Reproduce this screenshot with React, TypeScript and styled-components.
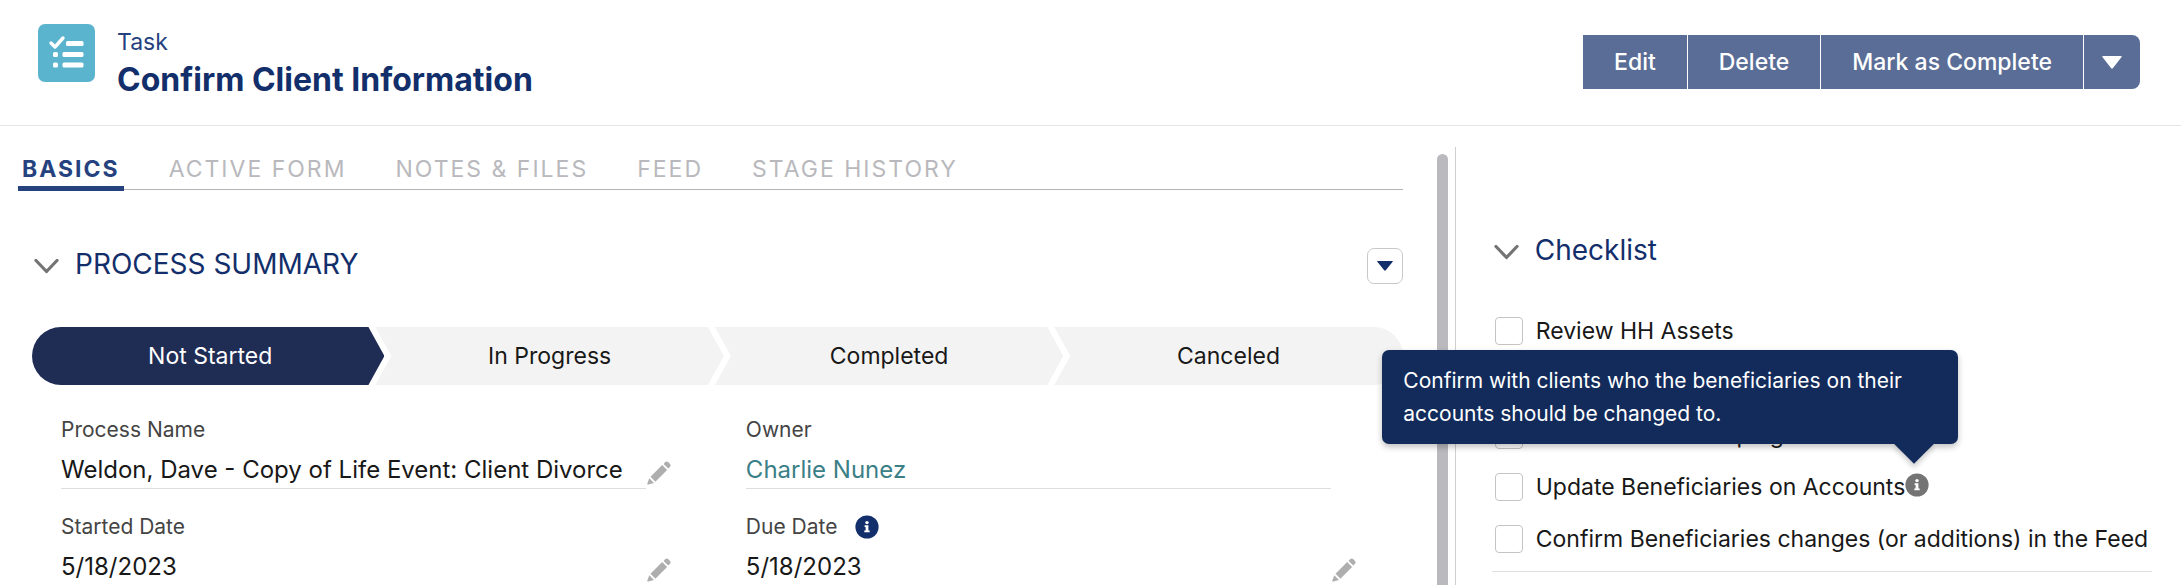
import React from 'react';
import styled, { createGlobalStyle } from 'styled-components';

const deep = '#132f6b';

const GlobalStyle = createGlobalStyle`
  *, *::before, *::after { box-sizing: border-box; }
  body {
    margin: 0;
    background: #fff;
    color: #181818;
    font-family: Inter, "Liberation Sans", sans-serif;
  }
  button { font: inherit; }
  h1, h2, ul, dl, dd, p { margin: 0; padding: 0; }
`;

const Page = styled.div`
  min-height: 100vh;
  display: flex;
  flex-direction: column;
  overflow: hidden;
`;

const Header = styled.header`
  display: flex;
  justify-content: space-between;
  align-items: flex-start;
  height: 126px;
  padding: 24px 41px 0 38px;
  border-bottom: 1px solid #e5e5e5;
`;

const Heading = styled.div`
  display: flex;
  gap: 22px;
`;

const TaskTile = styled.svg`
  width: 57px;
  height: 58px;
  display: block;
`;

const Kicker = styled.p`
  font-size: 23px;
  line-height: 36px;
  color: #25427f;
`;

const Title = styled.h1`
  font-size: 32px;
  line-height: 40px;
  font-weight: 700;
  color: ${deep};
`;

const ButtonGroup = styled.div`
  display: flex;
  gap: 1px;
  margin-top: 11px;
  border-radius: 0 8px 8px 0;
  overflow: hidden;
`;

const ActionButton = styled.button<{ $compact?: boolean }>`
  height: 54px;
  display: flex;
  align-items: center;
  border: 0;
  padding: 0 ${p => (p.$compact ? 18 : 31)}px;
  background: #5a6d96;
  color: #fff;
  font-size: 23px;
  font-weight: 500;
`;

const Body = styled.div`
  flex: 1;
  display: flex;
`;

const Main = styled.main`
  flex: 1;
  display: flex;
  min-width: 0;
`;

const MainContent = styled.div`
  flex: 1;
  min-width: 0;
`;

const ScrollTrack = styled.div`
  flex: none;
  width: 52px;
  padding: 28px 7px 0 34px;
  display: flex;
`;

const ScrollThumb = styled.div`
  width: 11px;
  background: #bab9be;
  border-radius: 6px 6px 0 0;
`;

const Tabs = styled.nav`
  display: flex;
  gap: 41px;
  height: 64px;
  margin-left: 18px;
  border-bottom: 1px solid #b4b4b7;
`;

const Tab = styled.a<{ $active?: boolean }>`
  height: 65px;
  padding: 27px 4px 0;
  font-size: 23px;
  line-height: 32px;
  letter-spacing: 2px;
  text-decoration: none;
  white-space: nowrap;
  font-weight: ${p => (p.$active ? 700 : 400)};
  color: ${p => (p.$active ? '#25427f' : '#b9b9bd')};
  border-bottom: ${p => (p.$active ? '5px solid #25427f' : '0')};
`;

const SectionHead = styled.div<{ $aside?: boolean }>`
  display: flex;
  align-items: flex-start;
  height: 36px;
  margin: ${p => (p.$aside ? '87px 0 47px 38px' : '58px 0 43px 34px')};
`;

const SectionToggle = styled.button`
  display: flex;
  align-items: center;
  gap: 16px;
  border: 0;
  padding: 0;
  background: none;
  color: ${deep};
  font-size: 28px;
  line-height: 32px;
  svg { margin-top: 4px; }
`;

const MenuButton = styled.button`
  margin-left: auto;
  width: 36px;
  height: 36px;
  display: flex;
  align-items: center;
  justify-content: center;
  padding: 0;
  background: #fff;
  border: 1px solid #c9c9c9;
  border-radius: 7px;
`;

const Path = styled.ol`
  list-style: none;
  display: flex;
  height: 58px;
  margin: 0 0 0 32px;
  padding: 0;
  border-radius: 29px;
  overflow: hidden;
`;

const Stage = styled.li<{ $current?: boolean; $edge?: 'first' | 'last' }>`
  flex: 1;
  display: flex;
  align-items: center;
  justify-content: center;
  margin-right: ${p => (p.$edge === 'last' ? 0 : -9)}px;
  padding-left: ${p => (p.$edge === 'first' ? 4 : 0)}px;
  font-size: 23px;
  background: ${p => (p.$current ? '#1f2c54' : '#f3f3f3')};
  color: ${p => (p.$current ? '#fff' : '#181818')};
  clip-path: ${p =>
    p.$edge === 'first'
      ? 'polygon(0 0, calc(100% - 16px) 0, 100% 50%, calc(100% - 16px) 100%, 0 100%)'
      : p.$edge === 'last'
        ? 'polygon(0 0, 100% 0, 100% 100%, 0 100%, 16px 50%)'
        : 'polygon(0 0, calc(100% - 16px) 0, 100% 50%, calc(100% - 16px) 100%, 0 100%, 16px 50%)'};
`;

const Fields = styled.dl`
  display: grid;
  grid-template-columns: 1fr 1fr;
  column-gap: 75px;
  margin: 29px 47px 0 61px;
`;

const Field = styled.div`
  height: 97px;
`;

const FieldLabel = styled.dt`
  display: flex;
  align-items: center;
  gap: 18px;
  font-size: 21px;
  line-height: 32px;
  height: 32px;
  color: #444;
`;

const FieldValue = styled.dd`
  display: flex;
  justify-content: space-between;
  height: 43px;
  margin-right: 25px;
  font-size: 24px;
  line-height: 48px;
  white-space: nowrap;
  border-bottom: 1px solid #dedede;
`;

const OwnerLink = styled.a`
  color: #3b7f87;
  text-decoration: none;
`;

const EditButton = styled.button`
  flex: none;
  width: 24px;
  height: 24px;
  margin: 15px -25px 0 0;
  padding: 0;
  border: 0;
  background: none;
  svg { display: block; }
`;

const Aside = styled.aside`
  flex: 0 0 33.3%;
  min-width: 0;
  margin-top: 21px;
  padding-right: 29px;
  border-left: 1px solid #cfcfcf;
  h2 { font-weight: 400; }
`;

const Checklist = styled.ul`
  list-style: none;
  margin-left: 36px;
  padding-bottom: 18px;
  border-bottom: 1px solid #e0e0e0;
`;

const ChecklistItem = styled.li`
  display: flex;
  align-items: center;
  height: 28px;
  white-space: nowrap;
  & + & { margin-top: 24px; }
`;

const CheckLabel = styled.label`
  display: flex;
  align-items: center;
  gap: 13px;
  margin-left: 3px;
  font-size: 23px;
  line-height: 28px;
`;

const CheckBox = styled.input`
  appearance: none;
  width: 28px;
  height: 28px;
  margin: 0;
  background: #fff;
  border: 1px solid #c4c4c4;
  border-radius: 4px;
`;

const InfoAnchor = styled.span`
  position: relative;
  display: flex;
  width: 24px;
  height: 28px;
`;

const Tooltip = styled.div`
  position: absolute;
  right: -29px;
  bottom: 57px;
  width: 576px;
  padding: 14px 21px;
  border-radius: 7px;
  background: #122b5b;
  color: #fff;
  font-size: 21px;
  line-height: 33px;
  white-space: normal;
  box-shadow: 0 3px 6px rgba(0, 0, 0, 0.25);
  &::after {
    content: '';
    position: absolute;
    right: 30px;
    bottom: -14px;
    width: 28px;
    height: 28px;
    background: #122b5b;
    transform: rotate(45deg);
    box-shadow: 3px 3px 5px rgba(0, 0, 0, 0.18);
    clip-path: polygon(100% 0, 140% 0, 140% 140%, 0 140%, 0 100%);
  }
`;

const Caret = ({ w, h, color }: { w: number; h: number; color: string }) => (
  <svg width={w} height={h} viewBox="0 0 20 14" preserveAspectRatio="none" aria-hidden>
    <path d="M1 0h18q1.400 0 .6 1L11 13q-1 1.200-2 0L.4 1Q-.4 0 1 0z" fill={color} />
  </svg>
);

const Chevron = () => (
  <svg width="25" height="16" viewBox="0 0 25 16" aria-hidden>
    <path d="M2 2.500l10.500 11L23 2.500" fill="none" stroke="#747474" strokeWidth="3.200" strokeLinecap="round" strokeLinejoin="round" />
  </svg>
);

const Pencil = () => (
  <svg width="24" height="24" viewBox="0 0 24 24" fill="#aeaeae" aria-hidden>
    <path d="M16.600 2.900l1.700-1.900q1.400-1.200 2.800 0l1.900 1.900q1.200 1.400 0 2.800l-1.800 1.800z" />
    <path d="M15.200 4.100l4.900 4.900L8.400 20.700l-4.900-4.900z" />
    <path d="M2.300 17.200l4.700 4.700-5.700 1.700q-1.200.2-1-1z" />
  </svg>
);

const Info = ({ color }: { color: string }) => (
  <svg width="24" height="24" viewBox="0 0 24 24" aria-hidden>
    <circle cx="12" cy="12" r="11.600" fill={color} />
    <circle cx="12" cy="7.600" r="1.700" fill="#fff" />
    <path d="M9.600 10.300h3.800v5.200h1.300v1.700H9.300v-1.700h1.300V12h-1z" fill="#fff" />
  </svg>
);

const stages = ['Not Started', 'In Progress', 'Completed', 'Canceled'];
const tabs = ['BASICS', 'ACTIVE FORM', 'NOTES & FILES', 'FEED', 'STAGE HISTORY'];
const tip = 'Confirm with clients who the beneficiaries on their accounts should be changed to.';
const tasks: { text: string; tip?: string }[] = [
  { text: 'Review HH Assets' },
  { text: 'Review Account Titles' },
  { text: 'Discuss Housekeeping Documentation' },
  { text: 'Update Beneficiaries on Accounts', tip },
  { text: 'Confirm Beneficiaries changes (or additions) in the Feed' },
];

const fields: { label: string; value: string; link?: boolean; info?: boolean }[] = [
  { label: 'Process Name', value: 'Weldon, Dave - Copy of Life Event: Client Divorce' },
  { label: 'Owner', value: 'Charlie Nunez', link: true },
  { label: 'Started Date', value: '5/18/2023' },
  { label: 'Due Date', value: '5/18/2023', info: true },
];

export default function App() {
  return (
    <Page>
      <GlobalStyle />
      <Header>
        <Heading>
          <TaskTile viewBox="0 0 57 58" aria-hidden>
            <rect width="57" height="58" rx="7" fill="#5bb4ce" />
            <path d="M13 19l4 4 8-9" fill="none" stroke="#fff" strokeWidth="3.400" strokeLinecap="round" strokeLinejoin="round" />
            <g fill="#fff">
              <rect x="28" y="17" width="17.500" height="5" rx="1.500" />
              <rect x="15" y="28" width="5" height="5" rx="1.500" />
              <rect x="24.500" y="28" width="21" height="5" rx="1.500" />
              <rect x="15" y="38.500" width="5" height="5" rx="1.500" />
              <rect x="24.500" y="38.500" width="21" height="5" rx="1.500" />
            </g>
          </TaskTile>
          <div>
            <Kicker>Task</Kicker>
            <Title>Confirm Client Information</Title>
          </div>
        </Heading>
        <ButtonGroup>
          <ActionButton type="button">Edit</ActionButton>
          <ActionButton type="button">Delete</ActionButton>
          <ActionButton type="button">Mark as Complete</ActionButton>
          <ActionButton type="button" $compact aria-label="More actions">
            <Caret w={20} h={13} color="#fff" />
          </ActionButton>
        </ButtonGroup>
      </Header>
      <Body>
        <Main>
          <MainContent>
            <Tabs>
              {tabs.map((t, i) => (
                <Tab key={t} href="#" $active={i === 0}>{t}</Tab>
              ))}
            </Tabs>
            <SectionHead>
              <SectionToggle type="button"><Chevron />PROCESS SUMMARY</SectionToggle>
              <MenuButton type="button" aria-label="Section menu">
                <Caret w={16} h={10} color={deep} />
              </MenuButton>
            </SectionHead>
            <Path>
              {stages.map((s, i) => (
                <Stage key={s} $current={i === 0} $edge={i === 0 ? 'first' : i === 3 ? 'last' : undefined}>{s}</Stage>
              ))}
            </Path>
            <Fields>
              {fields.map(f => (
                <Field key={f.label}>
                  <FieldLabel>{f.label}{f.info && <Info color={deep} />}</FieldLabel>
                  <FieldValue>
                    {f.link ? <OwnerLink href="#">{f.value}</OwnerLink> : <span>{f.value}</span>}
                    {!f.link && <EditButton type="button" aria-label={`Edit ${f.label}`}><Pencil /></EditButton>}
                  </FieldValue>
                </Field>
              ))}
            </Fields>
          </MainContent>
          <ScrollTrack><ScrollThumb /></ScrollTrack>
        </Main>
        <Aside>
          <SectionHead $aside>
            <h2><SectionToggle type="button"><Chevron />Checklist</SectionToggle></h2>
          </SectionHead>
          <Checklist>
            {tasks.map(t => (
              <ChecklistItem key={t.text}>
                <CheckLabel><CheckBox type="checkbox" />{t.text}</CheckLabel>
                {t.tip && (
                  <InfoAnchor>
                    <Info color="#747474" />
                    <Tooltip role="tooltip">{t.tip}</Tooltip>
                  </InfoAnchor>
                )}
              </ChecklistItem>
            ))}
          </Checklist>
        </Aside>
      </Body>
    </Page>
  );
}
